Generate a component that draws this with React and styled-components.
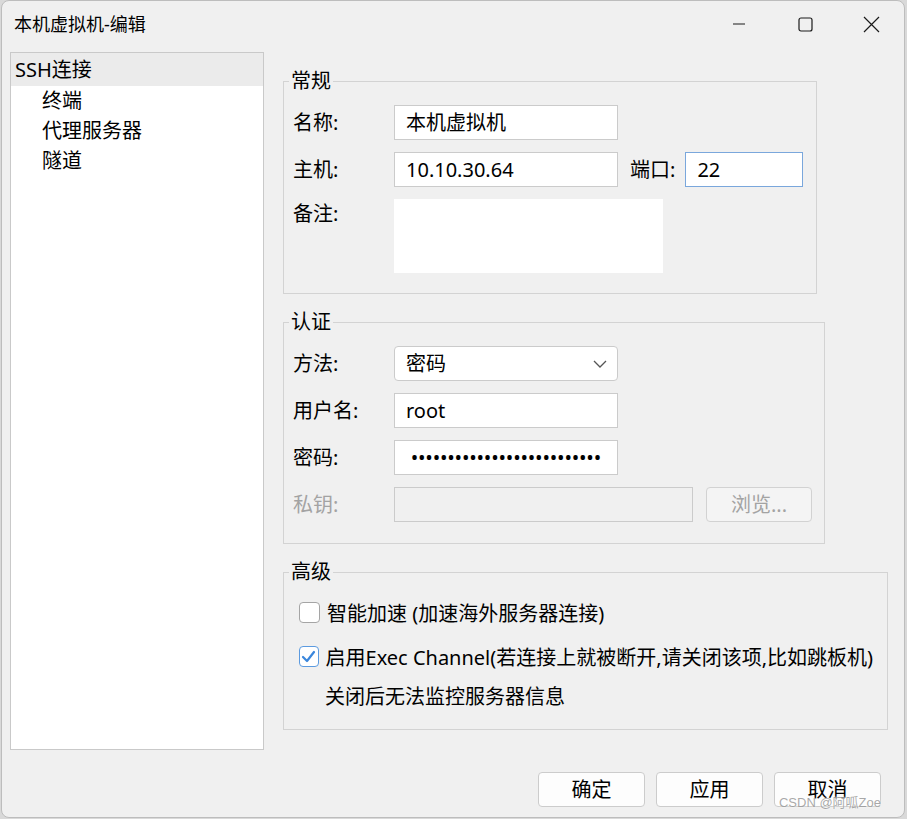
import React from 'react';
import styled, { createGlobalStyle } from 'styled-components';

const GlobalStyle = createGlobalStyle`
    html, body {
        margin: 0;
        padding: 0;
        background: #d9d9d9;
    }
    body {
        font-family: "Noto Sans", "Noto Sans CJK SC", sans-serif;
        color: #000;
    }
    * {
        box-sizing: border-box;
    }
`

const Window = styled.div`
    position: relative;
    margin-left: 1px;
    width: 904px;
    height: 818px;
    background: #f0f0f0;
    border: 1px solid #bdbdbd;
    border-radius: 8px;
    display: flex;
    flex-direction: column;
    overflow: hidden;
`

const TitleBar = styled.div`
    display: flex;
    align-items: center;
    height: 46px;
    padding-left: 12px;
    flex-shrink: 0;
`

const Title = styled.div`
    flex: 1;
    font-size: 18px;
    line-height: 22px;
`

const Control = styled.div`
    width: 66px;
    height: 46px;
    display: flex;
    align-items: center;
    justify-content: center;
    color: #1a1a1a;
`

const Body = styled.div`
    display: flex;
    padding: 5px 0 0 8px;
`

const Tree = styled.div`
    width: 254px;
    height: 698px;
    background: #fff;
    border: 1px solid #c9c9c9;
    font-size: 20px;
    flex-shrink: 0;
`

const TreeItem = styled.div`
    height: ${(p) => (p.selected ? '33px' : '30px')};
    line-height: ${(p) => (p.selected ? '33px' : '30px')};
    padding-left: ${(p) => p.indent}px;
    background: ${(p) => (p.selected ? '#ebebeb' : 'transparent')};
    white-space: nowrap;
`

const Column = styled.div`
    display: flex;
    flex-direction: column;
    margin-left: 19px;
    padding-top: 18px;
`

const Group = styled.fieldset`
    width: ${(p) => p.width}px;
    margin: ${(p) => (p.first ? '0' : '17px')} 0 0 0;
    padding: ${(p) => p.pad};
    border: 1px solid #d3d3d3;
    min-inline-size: 0;
`

const Legend = styled.legend`
    font-size: 20px;
    line-height: 22px;
    padding: 0 2px;
    margin-left: ${(p) => p.shift}px;
`

const FormGrid = styled.div`
    display: grid;
    grid-template-columns: ${(p) => p.cols};
    grid-auto-rows: 35px;
    row-gap: 12px;
    justify-content: start;
    align-items: center;
`

const Label = styled.div`
    font-size: 20px;
    line-height: 35px;
    white-space: nowrap;
    color: ${(p) => (p.disabled ? '#a3a3a3' : '#000')};
    align-self: ${(p) => (p.top ? 'start' : 'center')};
    margin-top: ${(p) => (p.top ? '-3px' : '0')};
    margin-left: ${(p) => p.ml || 0}px;
`

const Field = styled.div`
    width: ${(p) => p.width}px;
    height: ${(p) => p.height || 35}px;
    margin-left: ${(p) => p.ml || 0}px;
    background: ${(p) => (p.disabled ? '#f0f0f0' : '#fff')};
    border: ${(p) => (p.bare ? 'none' : `1px solid ${p.focus ? '#7aa7dc' : '#cbcbcb'}`)};
    border-radius: ${(p) => (p.round ? '4px' : '0')};
    padding: 0 10px 0 11px;
    font-size: 20px;
    line-height: 33px;
    white-space: nowrap;
    overflow: hidden;
    display: flex;
    align-items: center;
    justify-content: space-between;
    grid-column: ${(p) => p.span || 'auto'};
    align-self: start;
`

const Dots = styled.div`
    font-size: 20px;
    letter-spacing: -0.2px;
    margin-left: -6px;
    direction: rtl;
    overflow: hidden;
    width: 100%;
    text-align: right;
`

const Browse = styled.div`
    display: flex;
    align-items: center;
`

const SmallButton = styled.div`
    width: 106px;
    height: 35px;
    margin-left: 13px;
    border: 1px solid #d2d2d2;
    border-radius: 4px;
    background: #f4f4f4;
    color: #a3a3a3;
    font-size: 20px;
    line-height: 33px;
    text-align: center;
`

const CheckRow = styled.div`
    display: flex;
    align-items: center;
    height: 30px;
    margin-top: ${(p) => p.mt || 0}px;
    font-size: 20px;
    white-space: nowrap;
`

const Box = styled.div`
    width: 21px;
    height: 21px;
    border-radius: 4px;
    border: 1px solid ${(p) => (p.checked ? '#5c9be0' : '#a5a5a5')};
    background: #fff;
    margin-right: 7px;
    display: flex;
    align-items: center;
    justify-content: center;
`

const Note = styled.div`
    font-size: 20px;
    line-height: 30px;
    margin: 11px 0 0 26px;
`

const Footer = styled.div`
    display: flex;
    justify-content: flex-end;
    gap: 11px;
    padding: 22px 23px 0 0;
`

const Button = styled.div`
    width: 107px;
    height: 35px;
    border: 1px solid #cccccc;
    border-radius: 4px;
    background: #fdfdfd;
    font-size: 20px;
    line-height: 33px;
    text-align: center;
`

const Watermark = styled.div`
    position: absolute;
    right: 23px;
    bottom: 6px;
    font-size: 13px;
    color: rgba(140, 140, 140, 0.75);
    font-family: "Liberation Sans", "Noto Sans CJK SC", sans-serif;
    text-shadow: 0 0 2px #fff;
    pointer-events: none;
`

const treeItems = [
    { text: 'SSH连接', indent: 4, selected: true },
    { text: '终端', indent: 31 },
    { text: '代理服务器', indent: 31 },
    { text: '隧道', indent: 31 },
]

const Chevron = () => (
    <svg width="14" height="8" viewBox="0 0 14 8">
        <path d="M1 1l6 6 6-6" fill="none" stroke="#555" strokeWidth="1.3" />
    </svg>
)

const Check = () => (
    <svg width="15" height="13" viewBox="0 0 15 13">
        <path d="M2 7l4 4 7-9" fill="none" stroke="#3a86dc" strokeWidth="2.2" strokeLinecap="round" strokeLinejoin="round" />
    </svg>
)

const App = () => {
    return (
        <>
            <GlobalStyle />
            <Window>
                <TitleBar>
                    <Title>本机虚拟机-编辑</Title>
                    <Control>
                        <svg width="14" height="2" viewBox="0 0 14 2">
                            <path d="M1 1h12" stroke="#1a1a1a" strokeWidth="1.2" />
                        </svg>
                    </Control>
                    <Control>
                        <svg width="15" height="15" viewBox="0 0 15 15">
                            <rect x="1" y="1" width="13" height="13" rx="2" fill="none" stroke="#1a1a1a" strokeWidth="1.2" />
                        </svg>
                    </Control>
                    <Control>
                        <svg width="17" height="17" viewBox="0 0 17 17">
                            <path d="M1 1l15 15M16 1L1 16" stroke="#1a1a1a" strokeWidth="1.2" />
                        </svg>
                    </Control>
                </TitleBar>
                <Body>
                    <Tree>
                        {treeItems.map((item) => (
                            <TreeItem key={item.text} indent={item.indent} selected={item.selected}>
                                {item.text}
                            </TreeItem>
                        ))}
                    </Tree>
                    <Column>
                        <Group first width={534} pad="13px 10px 20px 9px">
                            <Legend shift={-4}>常规</Legend>
                            <FormGrid cols="101px auto auto auto" style={{ gridTemplateRows: '35px 35px 74px' }}>
                                <Label>名称:</Label>
                                <Field width={224} span="span 3">本机虚拟机</Field>
                                <Label>主机:</Label>
                                <Field width={224}>10.10.30.64</Field>
                                <Label ml={12}>端口:</Label>
                                <Field width={118} focus ml={10}>22</Field>
                                <Label top>备注:</Label>
                                <Field width={269} height={74} bare span="span 3" />
                            </FormGrid>
                        </Group>
                        <Group width={542} pad="13px 10px 21px 9px">
                            <Legend shift={-4}>认证</Legend>
                            <FormGrid cols="101px auto">
                                <Label>方法:</Label>
                                <Field width={224} round>
                                    <span>密码</span>
                                    <Chevron />
                                </Field>
                                <Label>用户名:</Label>
                                <Field width={224}>root</Field>
                                <Label>密码:</Label>
                                <Field width={224}>
                                    <Dots>{'•'.repeat(26)}</Dots>
                                </Field>
                                <Label disabled>私钥:</Label>
                                <Browse>
                                    <Field width={299} disabled />
                                    <SmallButton>浏览...</SmallButton>
                                </Browse>
                            </FormGrid>
                        </Group>
                        <Group width={605} pad="14px 14px 17px 15px">
                            <Legend shift={-10}>高级</Legend>
                            <CheckRow>
                                <Box />
                                智能加速 (加速海外服务器连接)
                            </CheckRow>
                            <CheckRow mt={14}>
                                <Box checked>
                                    <Check />
                                </Box>
                                启用Exec Channel(若连接上就被断开,请关闭该项,比如跳板机)
                            </CheckRow>
                            <Note>关闭后无法监控服务器信息</Note>
                        </Group>
                    </Column>
                </Body>
                <Footer>
                    <Button>确定</Button>
                    <Button>应用</Button>
                    <Button>取消</Button>
                </Footer>
                <Watermark>CSDN @阿呱Zoe</Watermark>
            </Window>
        </>
    );
};

export default App;
